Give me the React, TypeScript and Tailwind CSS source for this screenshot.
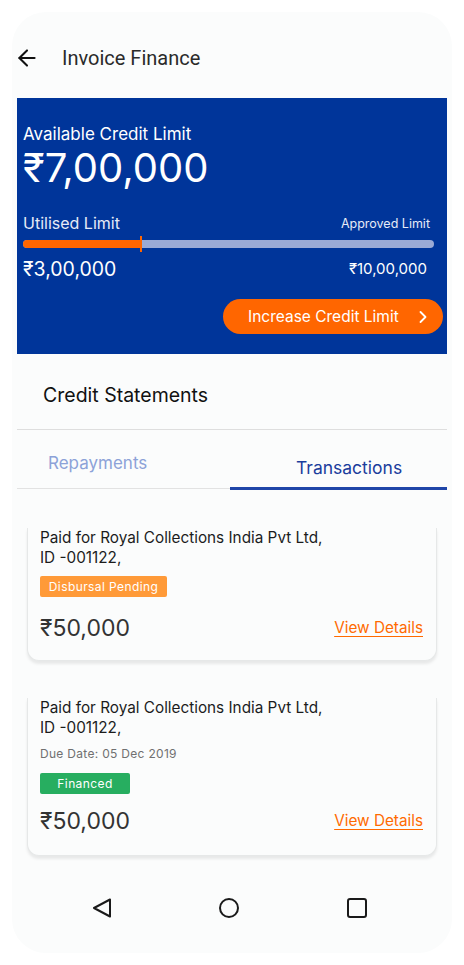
import { ArrowLeft, ChevronRight } from 'lucide-react'

type Txn = {
  title: string
  id: string
  due?: string
  status: string
  tone: 'pending' | 'financed'
  amount: string
}

const txns: Txn[] = [
  { title: 'Paid for Royal Collections India Pvt Ltd,', id: 'ID -001122,', status: 'Disbursal Pending', tone: 'pending', amount: '₹50,000' },
  { title: 'Paid for Royal Collections India Pvt Ltd,', id: 'ID -001122,', due: 'Due Date: 05 Dec 2019', status: 'Financed', tone: 'financed', amount: '₹50,000' },
]

function TxnCard({ t }: { t: Txn }) {
  return (
    <div
      className={
        t.due
          ? 'mx-[15px] rounded-b-[12px] border-x border-b border-[#e6e8e8] bg-[#fbfcfc] pl-[12px] pr-[22px] pb-[19px] shadow-[0_3px_3px_rgba(0,0,0,0.08)]'
          : 'mx-[15px] rounded-b-[12px] border-x border-b border-[#e6e8e8] bg-[#fbfcfc] pl-[12px] pr-[22px] pb-[17px] shadow-[0_3px_3px_rgba(0,0,0,0.08)]'
      }
    >
      <p className="text-[15.3px] leading-[20px] text-[#1c1c1c]">{t.title}</p>
      <p className="text-[15.3px] leading-[20px] text-[#1c1c1c]">{t.id}</p>
      {t.due && <p className="mt-[7px] text-[12px] leading-[18px] tracking-[0.3px] text-[#707070]">{t.due}</p>}
      <div className={t.due ? 'mt-[10px]' : 'mt-[8px]'}>
        <span
          className={
            t.tone === 'pending'
              ? 'flex h-[21px] w-[127px] items-center justify-center rounded-[2px] bg-[#ff9a38] text-[12px] tracking-[0.4px] text-white'
              : 'flex h-[21px] w-[90px] items-center justify-center rounded-[2px] bg-[#27ae60] text-[12px] tracking-[0.4px] text-white'
          }
        >
          {t.status}
        </span>
      </div>
      <div className={t.due ? 'mt-[12px] flex items-center justify-between' : 'mt-[16px] flex items-center justify-between'}>
        <span className="text-[23px] leading-[30px] text-[#333]">{t.amount}</span>
        <a className="-mr-[9px] text-[15.3px] text-[#ff6a00] underline underline-offset-[3px]">View Details</a>
      </div>
    </div>
  )
}

export default function App() {
  return (
    <div className="min-h-screen bg-white pt-3" style={{ fontFamily: 'Inter, "Noto Sans", sans-serif' }}>
      <div className="mx-3 flex h-[941px] w-[440px] flex-col rounded-[34px] bg-[#fbfcfc]">
        {/* Header */}
        <div className="flex h-[86px] items-center pt-[6px] pl-[2px]">
          <ArrowLeft size={26} strokeWidth={1.9} className="text-[#111]" />
          <span className="ml-[22px] text-[20px] text-[#2a2a2a]" style={{ fontFamily: 'Roboto, sans-serif' }}>
            Invoice Finance
          </span>
        </div>

        {/* Credit limit card */}
        <div className="mx-[5px] h-[256px] bg-[#00359a] pl-[6px] pr-[13px] text-white">
          <p className="mt-[25px] text-[17px] leading-[22px]">Available Credit Limit</p>
          <p className="text-[40px] leading-[46px]">₹7,00,000</p>
          <div className="mt-[22px] flex items-end justify-between">
            <span className="text-[16px] leading-[20px] text-[#e6ebf7]">Utilised Limit</span>
            <span className="pr-[4px] text-[12.5px] leading-[18px] text-[#e6ebf7]">Approved Limit</span>
          </div>
          <div className="relative mt-[7px] h-[8px] rounded-full bg-[#9aaad6]">
            <div className="h-full w-[118px] rounded-l-full bg-[#ff6600]" />
            <div className="absolute left-[117px] top-[-4px] h-[16px] w-[2px] bg-[#ff6600]" />
          </div>
          <div className="mt-[9px] flex items-center justify-between">
            <span className="text-[19.5px] leading-[24px]">₹3,00,000</span>
            <span className="pr-[7px] text-[15px] leading-[20px]">₹10,00,000</span>
          </div>
          <div className="mt-[18px] flex justify-end">
            <button className="mr-[-9px] flex h-[35px] w-[220px] items-center justify-between rounded-full bg-[#ff6600] pl-[25px] pr-[10px] text-[15.5px] text-white">
              Increase Credit Limit
              <ChevronRight size={20} strokeWidth={2.2} />
            </button>
          </div>
        </div>

        {/* Credit statements */}
        <div className="mx-[5px] border-b border-[#dedede]">
          <p className="pl-[26px] pt-[29px] pb-[22px] text-[19.5px] leading-[24px] text-[#111]">Credit Statements</p>
        </div>
        <div className="mx-[5px] flex h-[59px] border-b border-[#e2e2e2]">
          <div className="flex w-[213px] items-start pl-[31px] pt-[21px] text-[17px] text-[#8ca2d8]">Repayments</div>
          <div className="relative flex flex-1 items-start pl-[66px] pt-[25px] text-[17.5px] text-[#1a3d9c]">
            Transactions
            <div className="absolute bottom-[-2px] left-0 right-0 h-[3px] bg-[#1f45a8]" />
          </div>
        </div>

        {/* Transactions list */}
        <div className="mt-[39px] flex flex-col gap-[37px]">
          {txns.map((t, i) => (
            <TxnCard key={i} t={t} />
          ))}
        </div>

        {/* Nav bar */}
        <div className="mt-auto mb-[34px] flex items-center justify-center gap-[106px] pr-[4px]">
          <svg width="20" height="20" viewBox="0 0 20 20" fill="none" stroke="#1a1a1a" strokeWidth="2" strokeLinejoin="round">
            <path d="M18 1.5 L2 10 L18 18.5 Z" />
          </svg>
          <svg width="22" height="22" viewBox="0 0 22 22" fill="none" stroke="#1a1a1a" strokeWidth="2">
            <circle cx="11" cy="11" r="9" />
          </svg>
          <svg width="22" height="22" viewBox="0 0 22 22" fill="none" stroke="#1a1a1a" strokeWidth="2">
            <rect x="2" y="2" width="18" height="18" rx="2" />
          </svg>
        </div>
      </div>
    </div>
  )
}
